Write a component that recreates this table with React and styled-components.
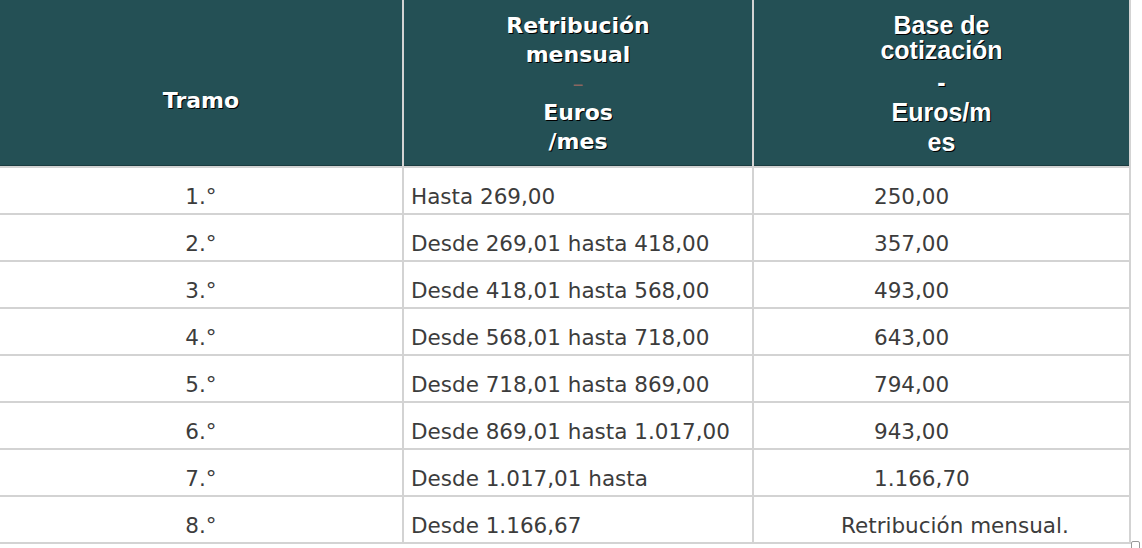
import React from 'react';
import styled, { createGlobalStyle } from 'styled-components';

const GlobalStyle = createGlobalStyle`
  html, body {
    margin: 0;
    padding: 0;
    background: #fff;
  }
`;

const rows = [
  { tramo: '1.°', range: 'Hasta 269,00', base: '250,00' },
  { tramo: '2.°', range: 'Desde 269,01 hasta 418,00', base: '357,00' },
  { tramo: '3.°', range: 'Desde 418,01 hasta 568,00', base: '493,00' },
  { tramo: '4.°', range: 'Desde 568,01 hasta 718,00', base: '643,00' },
  { tramo: '5.°', range: 'Desde 718,01 hasta 869,00', base: '794,00' },
  { tramo: '6.°', range: 'Desde 869,01 hasta 1.017,00', base: '943,00' },
  { tramo: '7.°', range: 'Desde 1.017,01 hasta', base: '1.166,70' },
  { tramo: '8.°', range: 'Desde 1.166,67', base: 'Retribución mensual.', wide: true },
];

const App = () => {
  return (
    <>
      <GlobalStyle />
      <Wrapper>
        <Table>
          <HeadRow>
            <HeadCell $top={34}>
              <HeadText>Tramo</HeadText>
            </HeadCell>
            <HeadCell>
              <HeadText>
                Retribución
                <br />
                mensual
              </HeadText>
              <SoftDash>–</SoftDash>
              <HeadText>
                Euros
                <br />
                /mes
              </HeadText>
            </HeadCell>
            <HeadCell $top={4}>
              <ArialText $lh={25}>
                Base de
                <br />
                cotización
              </ArialText>
              <ArialText $lh={30} $gap={4}>-</ArialText>
              <ArialText $lh={30}>
                Euros/m
                <br />
                es
              </ArialText>
            </HeadCell>
          </HeadRow>
          {rows.map((row, index) => (
            <Row key={index}>
              <Cell $align="center">{row.tramo}</Cell>
              <Cell $pad={7}>{row.range}</Cell>
              <Cell $pad={row.wide ? 87 : 120}>{row.base}</Cell>
            </Row>
          ))}
          <Grip />
        </Table>
      </Wrapper>
    </>
  );
};

export default App;

const Wrapper = styled.div`
  width: 1142px;
  height: 548px;
  overflow: hidden;
  background: #fff;
`;

const Table = styled.div`
  position: relative;
  width: 1131px;
`;

const HeadRow = styled.div`
  display: grid;
  grid-template-columns: 404px 350px 377px;
  height: 168px;
  background: #245055;
  border-bottom: 2px solid #d3d3d3;
  box-sizing: border-box;
  box-shadow: inset 0 -1px 0 #1a3c40;
`;

const HeadCell = styled.div`
  display: flex;
  flex-direction: column;
  justify-content: center;
  align-items: center;
  text-align: center;
  border-right: 2px solid #d3d3d3;
  padding-top: ${({ $top }) => $top || 0}px;
  box-sizing: border-box;
  color: #fff;
`;

const HeadText = styled.div`
  font-family: 'DejaVu Sans', Verdana, sans-serif;
  font-weight: 700;
  font-size: 22px;
  line-height: 29px;
  text-shadow: 1px 1px 0 #000;
`;

const SoftDash = styled.div`
  font-family: 'DejaVu Sans', Verdana, sans-serif;
  font-size: 22px;
  line-height: 29px;
  color: #8a6660;
`;

const ArialText = styled.div`
  font-family: 'Liberation Sans', Arial, sans-serif;
  font-weight: 700;
  font-size: 25px;
  line-height: ${({ $lh }) => $lh}px;
  margin-top: ${({ $gap }) => $gap || 0}px;
  text-shadow: 1px 1px 0 #000;
`;

const Row = styled.div`
  display: grid;
  grid-template-columns: 404px 350px 377px;
  height: 47px;
  border-bottom: 2px solid #d3d3d3;
  box-sizing: border-box;
`;

const Cell = styled.div`
  display: flex;
  align-items: flex-end;
  justify-content: ${({ $align }) => ($align === 'center' ? 'center' : 'flex-start')};
  padding: 0 0 4px ${({ $pad }) => $pad || 0}px;
  border-right: 2px solid #d3d3d3;
  box-sizing: border-box;
  font-family: 'DejaVu Sans', Verdana, sans-serif;
  font-size: 21.5px;
  line-height: 24px;
  color: #3c3c3c;
  white-space: nowrap;
`;

const Grip = styled.span`
  position: absolute;
  right: -9px;
  bottom: -6px;
  width: 7px;
  height: 7px;
  border: 1px solid #999;
  border-radius: 2px;
  background: #fff;
`;
